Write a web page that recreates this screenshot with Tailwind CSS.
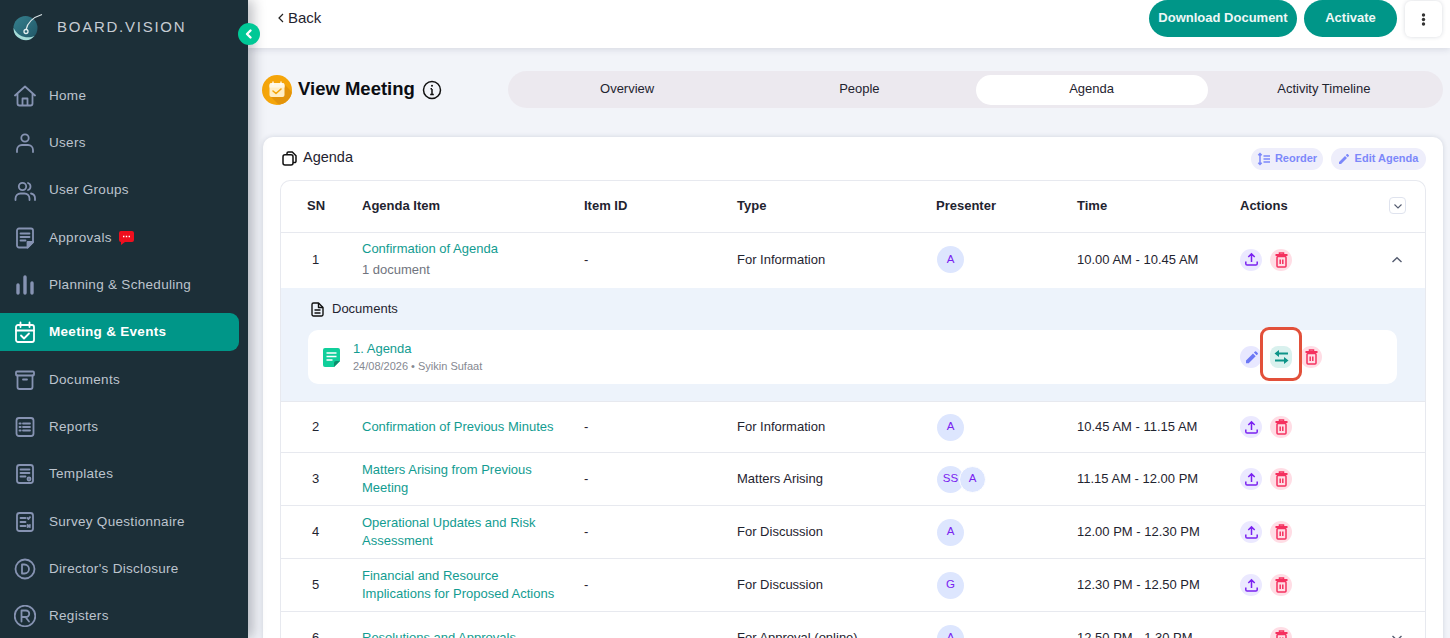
<!DOCTYPE html>
<html lang="en">
<head>
  <meta charset="UTF-8" />
  <title>View Meeting</title>
  <script src="https://cdn.jsdelivr.net/npm/@tailwindcss/browser@4"></script>
</head>
<body class="h-[638px] overflow-hidden bg-[#f2f4f9] font-['Liberation_Sans',Arial,sans-serif] text-[13px] text-[#1f2430]">
<div class="flex h-[638px] overflow-hidden">

  <!-- sidebar -->
  <aside class="relative z-20 w-[248px] shrink-0 bg-[#1c2f38] shadow-[5px_0_12px_rgba(20,25,40,0.28)]">
    <div class="flex h-[77px] items-start pl-[12px] pt-[13px]">
      <svg class="h-[28px] w-[32px]" viewBox="0 0 32 28" fill="none">
        <defs><linearGradient id="lg" x1="0" y1="0" x2="1" y2="1"><stop offset="0" stop-color="#35808e"/><stop offset="1" stop-color="#215565"/></linearGradient></defs>
        <circle cx="13.500" cy="15" r="12" fill="url(#lg)"/>
        <path d="M1.500 15a12 12 0 0 0 21 8c-6 2.500-16 2-21-8z" fill="#a7dcd8"/>
        <path d="M30 1.500C22 4 15.500 9 14 17" stroke="#dce6e8" stroke-width="1.300"/>
        <circle cx="14" cy="18.500" r="2" fill="none" stroke="#e8f0f1" stroke-width="1.300"/>
      </svg>
      <span class="ml-[13px] mt-[5px] text-[15px] leading-[18px] tracking-[1.75px] text-[#c6ccd3]">BOARD.VISION</span>
    </div>
    <nav id="nav" class="flex flex-col gap-[9.3px]"></nav>
    <button class="absolute left-[238px] top-[23px] flex h-[22px] w-[22px] items-center justify-center rounded-full bg-[#00c896]">
      <svg class="h-[12px] w-[12px]" viewBox="0 0 12 12" fill="none" stroke="#fff" stroke-width="2.400" stroke-linecap="round" stroke-linejoin="round"><path d="M7.500 2.500 4 6l3.500 3.500"/></svg>
    </button>
  </aside>

  <div class="min-w-0 flex-1">
    <!-- top bar -->
    <header class="relative z-10 flex h-[48px] items-start bg-white pl-[30px] pr-[8px] shadow-[0_2px_6px_rgba(40,50,80,0.12)]">
      <div class="mt-[9px] flex items-center gap-[4px] text-[15px] leading-[18px]">
        <svg class="h-[10px] w-[6px]" viewBox="0 0 6 10" fill="none" stroke="#222" stroke-width="1.200"><path d="M5 1 1 5l4 4"/></svg>
        Back
      </div>
      <div class="ml-auto flex items-start">
        <button class="h-[37px] w-[148px] rounded-full bg-[#009688] pb-[1px] text-[13px] font-bold text-[#eef7f6]">Download Document</button>
        <button class="ml-[7px] h-[37px] w-[93px] rounded-full bg-[#009688] pb-[1px] text-[13px] font-bold text-[#eef7f6]">Activate</button>
        <button class="ml-[8px] mt-[1px] flex h-[36px] w-[37px] items-center justify-center rounded-[6px] bg-white shadow-[0_0_4px_rgba(40,50,80,0.18)]">
          <svg class="h-[13px] w-[5px]" viewBox="0 0 5 13" fill="#333"><circle cx="2.500" cy="2" r="1.700"/><circle cx="2.500" cy="6.500" r="1.700"/><circle cx="2.500" cy="11" r="1.700"/></svg>
        </button>
      </div>
    </header>

    <main class="pl-[15px] pr-[7px]">
      <!-- title and tabs -->
      <div class="mt-[23px] flex h-[37px] items-center">
        <span class="relative ml-[-1px] flex h-[30px] w-[30px] shrink-0 items-center justify-center overflow-hidden rounded-full bg-[#f5a50a]">
          <svg class="h-[30px] w-[30px]" viewBox="0 0 30 30" fill="none">
            <path d="M22 9 30 17v13H17l-9-9z" fill="#e3930a"/>
            <rect x="7.500" y="8" width="15" height="14" rx="2" fill="#ffeec6"/>
            <path d="M7.500 10a2 2 0 0 1 2-2h11a2 2 0 0 1 2 2v2.500h-15z" fill="#fff7e3"/>
            <path d="M11 6.500v3.500M19 6.500v3.500" stroke="#fff" stroke-width="1.300"/>
            <path d="m11 16 3 2.500 5-4.500" stroke="#f5a50a" stroke-width="1.600" stroke-linecap="round" stroke-linejoin="round"/>
          </svg>
        </span>
        <h1 class="ml-[6px] pb-[2px] text-[18.500px] font-bold leading-[24px] text-[#0b0d12]">View Meeting</h1>
        <svg class="ml-[7px] h-[20px] w-[20px]" viewBox="0 0 20 20" fill="none" stroke="#111" stroke-width="1.500"><circle cx="10" cy="10" r="8.500"/><path d="M10 9v5.500M8.200 14.600h3.600M8.500 8.800H10" /><circle cx="10" cy="5.800" r="1" fill="#111" stroke="none"/></svg>
        <div class="ml-auto grid h-[37px] w-[935px] grid-cols-4 items-center rounded-full bg-[#ece9ef] px-[3px] text-center leading-[16px]">
          <span class="pb-[2px]">Overview</span>
          <span class="pb-[2px]">People</span>
          <span class="flex h-[30px] items-center justify-center rounded-full bg-white pb-[2px]">Agenda</span>
          <span class="pb-[2px]">Activity Timeline</span>
        </div>
      </div>

      <!-- agenda card -->
      <section class="mt-[29px] rounded-t-[10px] bg-white px-[17px] shadow-[0_0_5px_rgba(40,50,80,0.16)]">
        <div class="flex h-[43px] items-center">
          <svg class="ml-[2px] h-[15px] w-[15px]" viewBox="0 0 15 15" fill="none" stroke="#111" stroke-width="1.500" stroke-linejoin="round"><path d="M5 3.500V2.300A1.300 1.300 0 0 1 6.300 1h4L14 4.700v5.500a1.300 1.300 0 0 1-1.300 1.300H11"/><rect x="1" y="3.800" width="10" height="10.200" rx="2"/></svg>
          <span class="ml-[6px] pb-[2px] text-[14.500px]">Agenda</span>
          <button class="ml-auto flex h-[22px] w-[72px] items-center justify-center gap-[4px] rounded-full bg-[#eeeefb] text-[11px] font-bold text-[#7c88fa]">
            <svg class="h-[14px] w-[14px]" viewBox="0 0 14 14" fill="none" stroke="#7c88fa" stroke-width="1.500"><path d="M3 2v10M1.300 3.300 3 1.500l1.700 1.800M1.300 10.700 3 12.500l1.700-1.800M6.500 4H13M6.500 7H13M6.500 10H13"/></svg>
            Reorder
          </button>
          <button class="ml-[8px] flex h-[22px] w-[95px] items-center justify-center gap-[6px] rounded-full bg-[#eeeefb] text-[11px] font-bold text-[#7c88fa]">
            <svg class="h-[10px] w-[10px]" viewBox="0 0 10 10" fill="#7c88fa"><path d="M0 10V8l6-6 2 2-6 6zM6.800 1.200 7.900.1a.6.6 0 0 1 .8 0l1.200 1.200a.6.6 0 0 1 0 .8L8.800 3.200z"/></svg>
            Edit Agenda
          </button>
        </div>

        <div class="rounded-t-[10px] border-x border-t border-[#e7e9ef]">
          <div class="grid h-[52px] grid-cols-[81px_222px_153px_199px_141px_163px_1fr] items-center border-b border-[#e7e9ef] pb-[2px] font-bold">
            <span class="pl-[26px]">SN</span>
            <span>Agenda Item</span>
            <span>Item ID</span>
            <span>Type</span>
            <span>Presenter</span>
            <span>Time</span>
            <span class="flex items-center justify-between pr-[19px]">Actions
              <span class="flex h-[17px] w-[17px] items-center justify-center rounded-[4px] border border-[#dfe3ee]">
                <svg class="h-[8px] w-[10px]" viewBox="0 0 10 8" fill="none" stroke="#555c70" stroke-width="1.100"><path d="m1.500 2.500 3.500 3.500 3.500-3.500"/></svg>
              </span>
            </span>
          </div>
          <div id="rows"></div>
        </div>
      </section>
    </main>
  </div>
</div>

<script>
  const upload = `<span class="flex h-[22px] w-[22px] items-center justify-center rounded-full bg-[#ebe9ff]"><svg class="h-[15px] w-[15px]" viewBox="0 0 15 15" fill="none" stroke="#7a22f0" stroke-width="1.500"><path d="M7.500 10V2M4.300 5l3.200-3.200L10.700 5M1.800 9.500v2.300a1.300 1.300 0 0 0 1.300 1.300h8.800a1.300 1.300 0 0 0 1.300-1.300V9.500"/></svg></span>`;
  const trash = `<svg class="h-[16px] w-[15px]" viewBox="0 0 15 16" fill="none" stroke="#f5305f" stroke-width="1.500"><path d="M1.500 3h12" stroke-width="2"/><path d="M5.500 2.500V1h4v1.500"/><rect x="3" y="4.500" width="9" height="10.500" rx="1"/><path d="M6.200 7.500v4.500M8.800 7.500v4.500"/></svg>`;
  const del = `<span class="flex h-[22px] w-[22px] items-center justify-center rounded-full bg-[#ffdde5]">${trash}</span>`;
  const spacer = `<span class="h-[22px] w-[22px]"></span>`;
  const chevUp = `<svg class="h-[8px] w-[12px]" viewBox="0 0 12 8" fill="none" stroke="#555c70" stroke-width="1.400"><path d="M1.500 6 6 1.700 10.500 6"/></svg>`;
  const chevDown = `<svg class="h-[8px] w-[12px]" viewBox="0 0 12 8" fill="none" stroke="#555c70" stroke-width="1.400"><path d="M1.500 2 6 6.300 10.500 2"/></svg>`;
  const avatar = (t, extra) => `<span class="flex h-[27px] w-[27px] items-center justify-center rounded-full bg-[#dde6fe] text-[11.500px] text-[#7a22f0] ${extra}">${t}</span>`;

  const rows = [
    { n: 1, h: 'h-[55px] pb-[2px]', title: 'Confirmation of Agenda', sub: '1 document', type: 'For Information', who: ['A'], time: '10.00 AM - 10.45 AM', chev: chevUp },
    { n: 2, h: 'h-[51px]', title: 'Confirmation of Previous Minutes', type: 'For Information', who: ['A'], time: '10.45 AM - 11.15 AM' },
    { n: 3, h: 'h-[53px]', title: 'Matters Arising from Previous Meeting', type: 'Matters Arising', who: ['SS', 'A'], time: '11.15 AM - 12.00 PM' },
    { n: 4, h: 'h-[53px]', title: 'Operational Updates and Risk Assessment', type: 'For Discussion', who: ['A'], time: '12.00 PM - 12.30 PM' },
    { n: 5, h: 'h-[53px]', title: 'Financial and Resource Implications for Proposed Actions', type: 'For Discussion', who: ['G'], time: '12.30 PM - 12.50 PM' },
    { n: 6, h: 'h-[53px]', title: 'Resolutions and Approvals', type: 'For Approval (online)', who: ['A'], time: '12.50 PM - 1.30 PM', chev: chevDown, noUpload: true },
  ];

  const docsPanel = `
    <div class="h-[114px] border-b border-[#e7e9ef] bg-[#edf3fb] pl-[27px] pr-[28px]">
      <div class="flex h-[42px] items-center gap-[8px]">
        <svg class="ml-[3px] h-[15px] w-[13px]" viewBox="0 0 13 15" fill="none" stroke="#111" stroke-width="1.400" stroke-linejoin="round"><path d="M2.500 1h5l4.500 4.500V12.500A1.500 1.500 0 0 1 10.500 14h-8A1.500 1.500 0 0 1 1 12.500v-10A1.500 1.500 0 0 1 2.500 1z"/><path d="M7.500 1v4.500H12M3.500 8h6M3.500 11h6"/></svg>
        <span>Documents</span>
      </div>
      <div class="relative grid h-[54px] grid-cols-[932px_1fr] items-center rounded-[10px] bg-white">
        <div class="flex items-center">
          <svg class="ml-[15px] h-[19px] w-[17px]" viewBox="0 0 17 19"><path d="M2 0h13a2 2 0 0 1 2 2v11l-6 6H2a2 2 0 0 1-2-2V2a2 2 0 0 1 2-2z" fill="#10cf9b"/><path d="M17 13h-4a2 2 0 0 0-2 2v4z" fill="#0b8c6b"/><path d="M3.500 5h10M3.500 8.500h10M3.500 12h6" stroke="#fff" stroke-width="1.300"/></svg>
          <div class="ml-[13px]">
            <div class="leading-[18px] text-[#129c91]">1. Agenda</div>
            <div class="text-[11px] leading-[16px] text-[#858891]">24/08/2026 • Syikin Sufaat</div>
          </div>
        </div>
        <div class="flex items-center gap-[8px]">
          <span class="flex h-[22px] w-[22px] items-center justify-center rounded-full bg-[#e8e8ff]"><svg class="h-[13px] w-[13px]" viewBox="0 0 13 13" fill="#6b77f5"><path d="M1 12.200V9.500L8 2.500l2.700 2.700-7 7zM8.900 1.600 10 .5a.8.800 0 0 1 1.100 0l1.600 1.600a.8.800 0 0 1 0 1.100L11.600 4.300z"/></svg></span>
          <span class="relative flex h-[22px] w-[22px] items-center justify-center rounded-[8px] bg-[#d9f1ee]">
            <svg class="h-[14px] w-[15px]" viewBox="0 0 15 14" fill="#0d9488"><path d="M0.500 3.500 5 0v2.600h9v1.800H5V7z"/><path d="M14.500 10.500 10 14v-2.600H1V9.600h9V7z"/></svg>
            <span class="absolute left-[-10px] top-[-19px] z-10 h-[54px] w-[42px] rounded-[9px] border-[3.500px] border-[#e2503a]"></span>
          </span>
          ${del}
        </div>
      </div>
    </div>`;

  document.getElementById('rows').innerHTML = rows.map(r => `
    <div class="grid ${r.h} grid-cols-[81px_222px_153px_199px_141px_163px_1fr] items-center ${r.n === 1 ? '' : 'border-b border-[#e7e9ef]'}">
      <span class="pl-[31px]">${r.n}</span>
      <div class="w-[200px] leading-[18.500px]">
        <div class="text-[#129c91]">${r.title}</div>
        ${r.sub ? `<div class="mt-[3px] text-[#70747e]">${r.sub}</div>` : ''}
      </div>
      <span>-</span>
      <span>${r.type}</span>
      <div class="ml-[1px] flex">${r.who.map((w, i) => avatar(w, i ? 'ml-[-5px] border border-white' : '')).join('')}</div>
      <span>${r.time}</span>
      <div class="flex items-center gap-[8px] pr-[22px]">
        ${r.noUpload ? spacer : upload}${del}
        ${r.chev ? `<span class="ml-auto">${r.chev}</span>` : ''}
      </div>
    </div>${r.n === 1 ? docsPanel : ''}`).join('');

  // sidebar icons, all on a 22 box with the same stroke
  const navItems = [
    ['Home', '<path d="M1 10.500 11 1.500l10 9M3.500 8.500v10a2 2 0 0 0 2 2h11a2 2 0 0 0 2-2v-10M8.500 20.500v-7h5v7"/>'],
    ['Users', '<circle cx="11" cy="6" r="3.700"/><path d="M3 20v-2a5 5 0 0 1 5-5h6a5 5 0 0 1 5 5v2"/>'],
    ['User Groups', '<circle cx="8.500" cy="6.500" r="3.700"/><path d="M1.500 20v-1.500a5 5 0 0 1 5-5h4a5 5 0 0 1 5 5V20M14 3a3.700 3.700 0 0 1 0 7M17 13.500a5 5 0 0 1 4 5V20"/>'],
    ['Approvals', '<path d="M5 1.500h12a2 2 0 0 1 2 2v11.500l-5.500 5.500H5a2 2 0 0 1-2-2V3.500a2 2 0 0 1 2-2z"/><path d="M6.500 6.500h9M6.500 10h9M6.500 13.500h5"/><path d="M19 15h-5.500v5.500z" fill="#8693b2"/>'],
    ['Planning & Scheduling', '<path d="M4 11v8M11 3v16M18 9v10" stroke-width="3.400"/>'],
    ['Meeting & Events', '<rect x="2" y="4" width="18" height="17" rx="2"/><path d="M2 9.500h18M6.500 1.500V6M15.500 1.500V6M7 14.500l3 3 5-5"/>'],
    ['Documents', '<rect x="2" y="2.500" width="18" height="4" rx="1"/><path d="M3.500 6.500V18a2 2 0 0 0 2 2h11a2 2 0 0 0 2-2V6.500M9 10.500h4"/>'],
    ['Reports', '<rect x="2.500" y="2" width="17" height="18" rx="2.500"/><path d="M9 7.500h7M9 11h7M9 14.500h7M5.500 7.500h1.200M5.500 11h1.200M5.500 14.500h1.200"/>'],
    ['Templates', '<rect x="3" y="2" width="16" height="18" rx="2.500"/><path d="M6.500 6.500h9M6.500 10h9M6.500 13.500h5"/><circle cx="15" cy="16" r="1.500"/>'],
    ['Survey Questionnaire', '<rect x="3" y="2" width="16" height="18" rx="2.500"/><path d="M6.500 7h5M6.500 11h5M6.500 15h5M13.500 7l1 1 1.500-1.800M13.500 14l2.500 2M16 14l-2.500 2"/>'],
    ["Director's Disclosure", '<circle cx="11" cy="11" r="9.500"/><path d="M8 6.500v9h2.500a4.500 4.500 0 0 0 0-9z"/>'],
    ['Registers', '<circle cx="11" cy="11" r="10.300"/><path d="M7.500 16.500v-11H12a3.200 3.200 0 0 1 0 6.500H7.500M11.500 12l3.500 4.500"/>'],
  ];
  const badge = `<svg class="ml-[7px] h-[14px] w-[15px]" viewBox="0 0 15 14"><path d="M2 0h11a2 2 0 0 1 2 2v7a2 2 0 0 1-2 2H6l-4 3v-3a2 2 0 0 1-2-2V2a2 2 0 0 1 2-2z" fill="#ef0f1e"/><path d="M4 5.500h1.400M6.800 5.500h1.400M9.600 5.500H11" stroke="#fff" stroke-width="1.500"/></svg>`;

  document.getElementById('nav').innerHTML = navItems.map(([label, icon]) => {
    const active = label === 'Meeting & Events';
    return `<a class="flex h-[38px] w-[239px] items-center rounded-r-[9px] pl-[14px] text-[13.500px] tracking-[0.3px] ${active ? 'bg-[#009688] font-bold text-white' : 'text-[#bcc4ce]'}">
      <svg class="h-[22px] w-[22px] shrink-0" viewBox="0 0 22 22" fill="none" stroke="${active ? '#fff' : '#8693b2'}" stroke-width="1.800" stroke-linecap="round" stroke-linejoin="round">${icon}</svg>
      <span class="ml-[13px]">${label}</span>${label === 'Approvals' ? badge : ''}
    </a>`;
  }).join('');
</script>
</body>
</html>
